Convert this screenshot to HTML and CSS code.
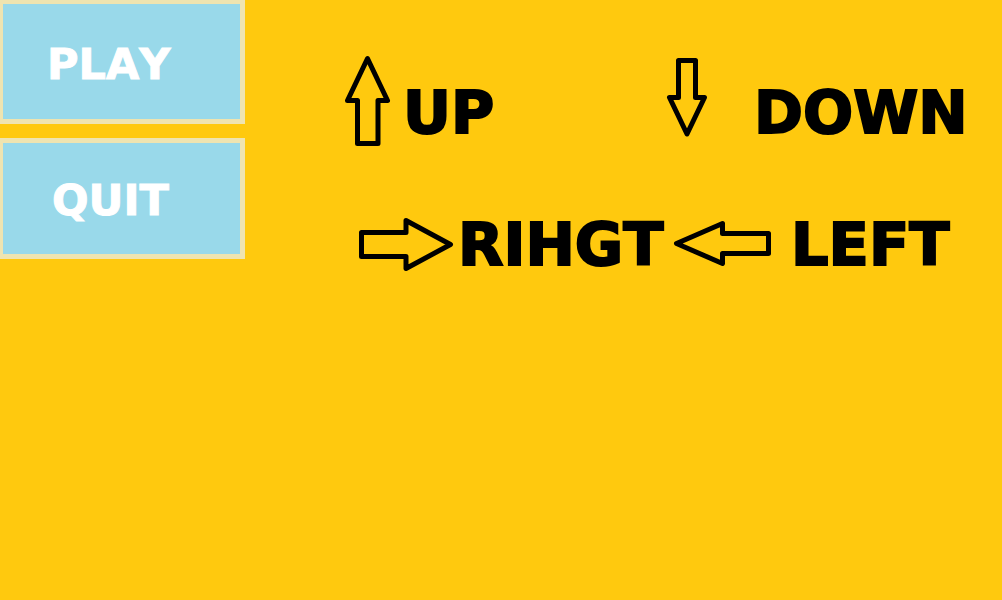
FILE: index.html
```html
<!DOCTYPE html>
<html lang="en">
<head>
<meta charset="utf-8">
<meta name="viewport" content="width=device-width, initial-scale=1">
<title>Game menu</title>
<link rel="stylesheet" href="styles.css">
</head>
<body>
<div class="screen">
  <nav class="menu">
    <button class="menu-button play" type="button">PLAY</button>
    <button class="menu-button quit" type="button">QUIT</button>
  </nav>
  <main class="controls">
    <div class="control up">
      <svg class="arrow" width="48" height="92" viewBox="344 55 48 92" aria-hidden="true"><path d="M367.5 58.5 387.5 100.5H378V143.5H357.5V100.5H347.5Z"/></svg>
      <span class="label">UP</span>
    </div>
    <div class="control down">
      <svg class="arrow" width="42" height="92" viewBox="666 55 42 92" aria-hidden="true"><path d="M678.5 60.5H695.5V97.5H704.5L687 134 669.5 97.5H678.5Z"/></svg>
      <span class="label">DOWN</span>
    </div>
    <div class="control right">
      <svg class="arrow" width="96" height="56" viewBox="358 216 96 56" aria-hidden="true"><path d="M361.5 232.5H406V220.5L450.5 244.5 406 268.5V256.5H361.5Z"/></svg>
      <span class="label">RIHGT</span>
    </div>
    <div class="control left">
      <svg class="arrow" width="100" height="56" viewBox="672 216 100 56" aria-hidden="true"><path d="M768.5 233.5H722.5V223.5L676.5 243.5 722.5 263.5V253.5H768.5Z"/></svg>
      <span class="label">LEFT</span>
    </div>
  </main>
</div>
</body>
</html>
```
FILE: styles.css
```css
* {
  box-sizing: border-box;
}

body {
  margin: 0;
  min-height: 100vh;
  background: #ffc90e;
  color: #000;
  font-family: "DejaVu Sans", Verdana, sans-serif;
  font-weight: 700;
  font-kerning: none;
}

.screen {
  display: flex;
  align-items: flex-start;
}

.menu {
  display: flex;
  flex-direction: column;
  gap: 14px;
  flex: 0 0 245px;
}

.menu-button {
  border: 5px solid #efe4b0;
  border-left-width: 3px;
  border-radius: 0;
  background: #99d9ea;
  color: #fff;
  font: inherit;
  font-kerning: none;
  font-size: 43px;
  line-height: 52px;
  text-align: left;
  -webkit-text-stroke: 1px #fff;
  cursor: pointer;
}

.play {
  border-top-width: 4px;
  padding: 34px 44px 29px;
}

.quit {
  padding: 31px 49px 28px;
}

.controls {
  flex: 1;
  display: grid;
  grid-template-columns: 322fr 336fr;
  row-gap: 66px;
  padding: 55px 0 0 99px;
}

.control {
  display: flex;
  align-items: center;
  min-width: 0;
}

.arrow {
  flex: none;
  fill: none;
  stroke: #000;
  stroke-width: 5;
  stroke-linejoin: round;
}

.label {
  font-size: 59px;
  line-height: 60px;
  -webkit-text-stroke: 2px #000;
}

.up,
.down {
  align-items: flex-end;
}

.up .label,
.down .label {
  padding-bottom: 4px;
}

.up {
  gap: 11px;
}

.down {
  gap: 46px;
}

.right .label,
.left .label {
  padding-top: 2px;
}

.right {
  gap: 4px;
  padding-left: 14px;
}

.left {
  gap: 19px;
  padding-left: 6px;
}
```
